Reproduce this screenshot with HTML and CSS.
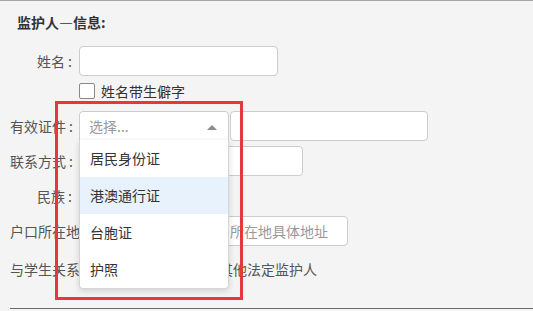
FILE: index.html
```html
<!DOCTYPE html>
<html lang="zh-CN">
<head>
    <meta charset="UTF-8">
    <meta name="viewport" content="width=device-width, initial-scale=1.0">
    <title>监护人信息</title>
    <link rel="stylesheet" href="styles.css">
</head>
<body>
    <div class="page">
        <h3 class="section-title">监护人—信息:</h3>

        <div class="form">
            <div class="row">
                <label class="label" for="name">姓名<span class="colon">:</span></label>
                <input class="input input-name" type="text" id="name">
            </div>

            <div class="row row-check">
                <span class="checkbox"></span>
                <span class="check-text">姓名带生僻字</span>
            </div>

            <div class="row row-id">
                <label class="label">有效证件<span class="colon">:</span></label>
                <div class="select open">
                    <span class="select-placeholder">选择...</span>
                    <span class="arrow"></span>
                    <ul class="dropdown">
                        <li>居民身份证</li>
                        <li class="active">港澳通行证</li>
                        <li>台胞证</li>
                        <li>护照</li>
                    </ul>
                </div>
                <input class="input input-idno" type="text">
            </div>

            <div class="row">
                <label class="label" for="phone">联系方式<span class="colon">:</span></label>
                <input class="input input-phone" type="text" id="phone">
            </div>

            <div class="row">
                <label class="label">民族<span class="colon">:</span></label>
                <div class="select">
                    <span class="select-placeholder">选择...</span>
                </div>
            </div>

            <div class="row">
                <label class="label">户口所在地<span class="colon">:</span></label>
                <div class="select select-small"></div>
                <input class="input input-address" type="text" placeholder="请输入户口所在地具体地址">
            </div>

            <div class="row row-relation">
                <label class="label">与学生关系<span class="colon">:</span></label>
                <label class="radio"><span class="radio-dot"></span>父亲</label>
                <label class="radio"><span class="radio-dot"></span>母亲</label>
                <label class="radio"><span class="radio-dot"></span>其他法定监护人</label>
            </div>
        </div>

        <div class="divider"></div>

        <div class="mark"></div>
    </div>
</body>
</html>
```

FILE: styles.css
```css
body {
    margin: 0;
    background-color: #f4f4f4;
    font-family: "Noto Sans CJK SC", "Noto Sans", sans-serif;
    font-size: 14px;
    color: #555;
}
.page {
    position: relative;
    height: 311px;
    border-top: 1px solid #a4a4a4;
    box-sizing: border-box;
    overflow: hidden;
}
.section-title {
    margin: 0;
    padding: 11px 0 0 17px;
    height: 34px;
    box-sizing: border-box;
    font-size: 14px;
    line-height: 20px;
    font-weight: bold;
    color: #333;
}
.form {
    display: flex;
    flex-direction: column;
    gap: 5px;
    padding: 11px 0 0 10px;
}
.row {
    display: flex;
    align-items: center;
    height: 30px;
}
.label {
    width: 62px;
    margin-right: 7px;
    flex-shrink: 0;
    text-align: right;
    white-space: nowrap;
    color: #555;
}
.colon {
    margin-left: 3px;
}
.input {
    height: 30px;
    box-sizing: border-box;
    border: 1px solid #ccc;
    border-radius: 4px;
    background: #fff;
    padding: 0 10px;
    font-family: inherit;
    font-size: 14px;
    color: #333;
}
.input::placeholder {
    color: #999;
}
.input-name {
    width: 199px;
}
.input-idno {
    width: 198px;
    margin-left: 1px;
}
.input-phone {
    width: 224px;
}
.input-address {
    width: 199px;
    margin-left: 4px;
}
.row-check {
    height: 20px;
    padding-left: 69px;
}
.checkbox {
    width: 16px;
    height: 16px;
    box-sizing: border-box;
    border: 1px solid #8a8a8a;
    border-radius: 2px;
    background: #fff;
    margin-right: 6px;
}
.check-text {
    color: #333;
}
.row-id {
    margin-top: 5px;
}
.select {
    position: relative;
    width: 150px;
    height: 30px;
    box-sizing: border-box;
    border: 1px solid #ccc;
    border-radius: 4px;
    background: #fff;
    display: flex;
    align-items: center;
    padding-left: 9px;
}
.select.open {
    border-radius: 4px 4px 0 0;
    z-index: 2;
}
.select-small {
    width: 66px;
}
.select-placeholder {
    color: #999;
}
.arrow {
    position: absolute;
    right: 11px;
    top: 13px;
    width: 0;
    height: 0;
    border-left: 5px solid transparent;
    border-right: 5px solid transparent;
    border-bottom: 5px solid #8c8c8c;
}
.dropdown {
    position: absolute;
    top: 100%;
    left: -1px;
    width: 150px;
    margin: 0;
    padding: 0;
    list-style: none;
    background: #fff;
    border: 1px solid #d6d6d6;
    border-top: none;
    border-radius: 0 0 4px 4px;
    box-shadow: 0 2px 6px rgba(0, 0, 0, 0.15);
    box-sizing: border-box;
}
.dropdown li {
    height: 37px;
    line-height: 37px;
    padding-left: 10px;
    color: #333;
}
.dropdown li.active {
    background: #e8f2fc;
}
.row-relation {
    margin-top: 3px;
}
.radio {
    display: flex;
    align-items: center;
    margin-right: 15px;
    color: #555;
    white-space: nowrap;
}
.radio-dot {
    width: 13px;
    height: 13px;
    box-sizing: border-box;
    border: 1px solid #999;
    border-radius: 50%;
    background: #fff;
    margin-right: 5px;
}
.divider {
    margin: 24px 0 0 10px;
    border-top: 1px solid #6a6a6a;
}
.mark {
    position: absolute;
    left: 55px;
    top: 100px;
    width: 188px;
    height: 199px;
    box-sizing: border-box;
    border: 3px solid #e5383b;
    z-index: 5;
}
```
